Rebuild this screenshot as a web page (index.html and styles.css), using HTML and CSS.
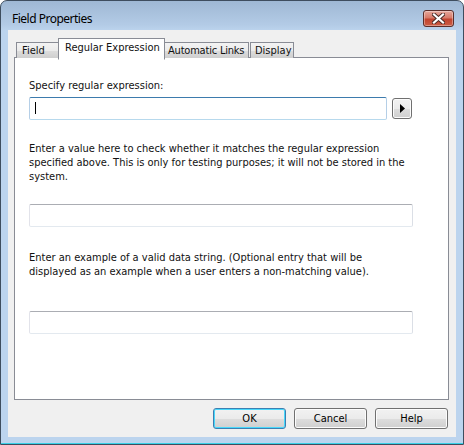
FILE: index.html
```html
<!DOCTYPE html>
<html>
<head>
<meta charset="utf-8">
<link rel="stylesheet" href="styles.css">
</head>
<body>
<div class="window">
  <div class="titlebar">
    <span class="title">Field Properties</span>
    <button class="close" aria-label="Close">
      <svg width="13" height="11" viewBox="0 0 13 11">
        <path d="M2 1.5 L11 9.5 M11 1.5 L2 9.5" stroke="#4a2a25" stroke-width="4" stroke-linecap="square"/>
        <path d="M2 1.5 L11 9.5 M11 1.5 L2 9.5" stroke="#fff" stroke-width="2.2" stroke-linecap="square"/>
      </svg>
    </button>
  </div>
  <div class="client">
    <div class="tabs">
      <div class="tab tab-field">Field</div>
      <div class="tab tab-active">Regular Expression</div>
      <div class="tab tab-links">Automatic Links</div>
      <div class="tab tab-display">Display</div>
    </div>
    <div class="panel">
      <div class="label first">Specify regular expression:</div>
      <div class="row">
        <div class="input focused"><span class="caret"></span></div>
        <button class="arrow" aria-label="Insert">
          <svg width="5" height="9" viewBox="0 0 5 9"><path d="M0 0 L5 4.5 L0 9 Z" fill="#000"/></svg>
        </button>
      </div>
      <div class="label second">Enter a value here to check whether it matches the regular expression specified above. This is only for testing purposes; it will not be stored in the system.</div>
      <div class="input wide"></div>
      <div class="label third">Enter an example of a valid data string. (Optional entry that will be displayed as an example when a user enters a non-matching value).</div>
      <div class="input wide"></div>
    </div>
    <div class="buttons">
      <button class="btn default">OK</button>
      <button class="btn">Cancel</button>
      <button class="btn">Help</button>
    </div>
  </div>
</div>
</body>
</html>
```
FILE: styles.css
```css
html, body {
  margin: 0;
  padding: 0;
  background: #fff;
}
body {
  width: 464px;
  height: 445px;
  overflow: hidden;
  font-family: "DejaVu Sans Condensed", "Liberation Sans", sans-serif;
  font-size: 11px;
  color: #111;
}
.window {
  box-sizing: border-box;
  width: 464px;
  height: 445px;
  border: 1px solid #3e4d5e;
  border-radius: 7px 7px 0 0;
  background: linear-gradient(#9fb8d4 0px, #b3cbe6 24px, #bcd4ee 30px, #bcd4ee 100%);
  padding: 0 7px 7px 7px;
  display: flex;
  flex-direction: column;
  box-shadow: inset 0 -1px 0 #3ad0e6;
}
.titlebar {
  height: 29px;
  display: flex;
  align-items: flex-start;
  justify-content: space-between;
}
.title {
  font-family: "Noto Sans", "Open Sans", sans-serif;
  font-size: 12px;
  letter-spacing: -0.5px;
  margin: 10px 0 0 4px;
  line-height: 16px;
  color: #000;
}
.close {
  box-sizing: border-box;
  width: 31px;
  height: 17px;
  margin-top: 9px;
  margin-right: 2px;
  border: 1px solid #5a2e2a;
  border-radius: 3px;
  background: linear-gradient(#e6a89c 0%, #d77a69 45%, #c2442f 55%, #cb5d45 100%);
  box-shadow: inset 0 0 0 1px rgba(255,255,255,0.35);
  padding: 0;
  display: flex;
  align-items: center;
  justify-content: center;
}
.client {
  flex: 1;
  background: #f0f0f0;
  padding: 7px 7px 8px 6px;
  display: flex;
  flex-direction: column;
}
.tabs {
  display: flex;
  align-items: flex-end;
  height: 21px;
  margin-bottom: -1px;
  padding-left: 2px;
  position: relative;
  z-index: 1;
}
.tab {
  box-sizing: border-box;
  height: 16px;
  border: 1px solid #898c95;
  border-bottom: none;
  background: linear-gradient(#f3f3f3 0%, #ebebeb 50%, #dddddd 51%, #cfcfcf 100%);
  padding: 1px 0 0 5px;
  line-height: 13px;
  white-space: nowrap;
  overflow: hidden;
}
.tab-field { width: 42px; border-right: none; }
.tab-active {
  width: 107px;
  background: #fff;
  padding: 1px 0 0 6px;
  line-height: 16px;
  border-bottom: 1px solid #fff;
  height: 22px;
  margin-bottom: -1px;
  position: relative;
  top: 1px;
}
.tab-links { width: 84px; border-left: none; padding-left: 3px; letter-spacing: -0.2px; }
.tab-display { width: 44px; margin-left: 1px; padding-left: 4px; }
.panel {
  box-sizing: border-box;
  height: 343px;
  border: 1px solid #898c95;
  background: #fff;
  padding: 21px 14px 0 14px;
}
.label {
  line-height: 14px;
}
.row {
  display: flex;
  align-items: flex-start;
  margin-top: 4px;
}
.input {
  box-sizing: border-box;
  height: 23px;
  border: 1px solid;
  border-color: #abadb3 #dbdfe6 #e3e9ef #e2e3ea;
  border-radius: 2px;
  background: #fff;
}
.input.focused {
  width: 358px;
  border-color: #3d7bad #b5cfe7 #b7d9ed #b5cfe7;
  position: relative;
}
.caret {
  position: absolute;
  left: 5px;
  top: 4px;
  width: 1px;
  height: 12px;
  background: #000;
}
.input.wide {
  width: 384px;
}
.arrow {
  box-sizing: border-box;
  width: 20px;
  height: 21px;
  margin: 1px 0 0 5px;
  border: 1px solid #707070;
  border-radius: 3px;
  background: linear-gradient(#f2f2f2 0%, #ebebeb 50%, #dddddd 51%, #cfcfcf 100%);
  box-shadow: inset 0 0 0 1px #fcfcfc;
  padding: 0;
  display: flex;
  align-items: center;
  justify-content: center;
}
.label.second { margin-top: 22px; margin-bottom: 20px; width: 380px; }
.label.third { margin-top: 24px; margin-bottom: 32px; width: 380px; }
.buttons {
  display: flex;
  justify-content: flex-end;
  gap: 8px;
  margin-top: 8px;
  padding-right: 1px;
}
.btn {
  box-sizing: border-box;
  width: 73px;
  height: 21px;
  border: 1px solid #707070;
  border-radius: 3px;
  background: linear-gradient(#f2f2f2 0%, #ebebeb 50%, #dddddd 51%, #cfcfcf 100%);
  box-shadow: inset 0 0 0 1px #fcfcfc;
  font-family: "DejaVu Sans Condensed", "Liberation Sans", sans-serif;
  font-size: 11px;
  color: #000;
  padding: 0;
}
.btn.default {
  border-color: #3c7fb1;
  box-shadow: inset 0 0 0 1px #48d8fb;
}
```
